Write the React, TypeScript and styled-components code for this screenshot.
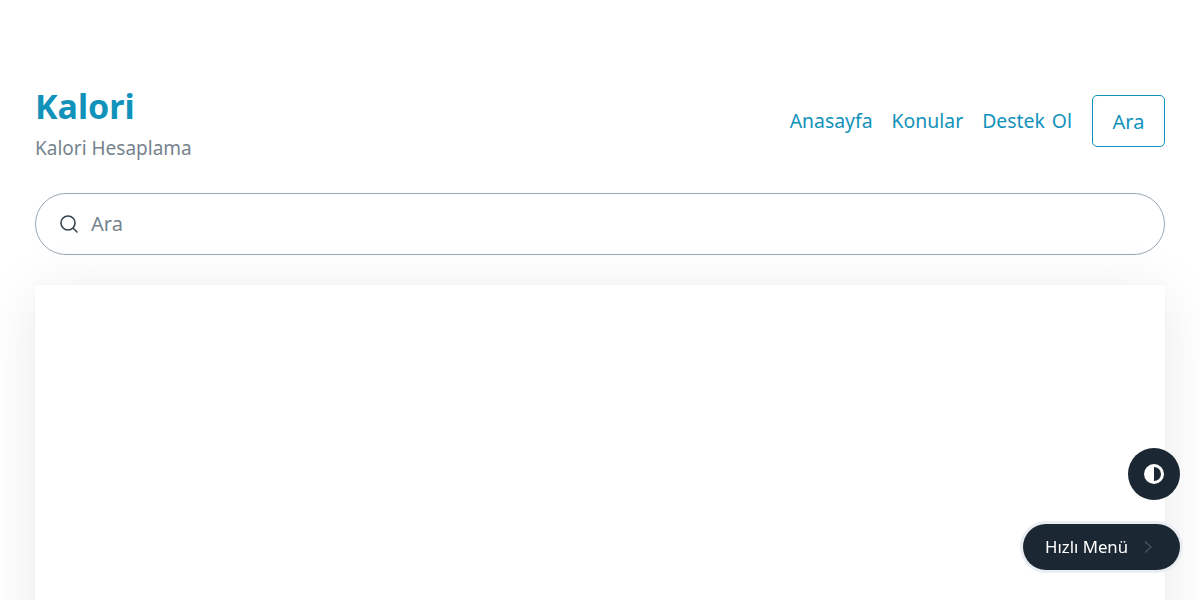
import React from 'react';
import styled, { createGlobalStyle } from 'styled-components';

const GlobalStyle = createGlobalStyle`
  html, body {
    margin: 0;
    height: 100%;
    overflow: hidden;
    background: #fff;
  }

  body {
    font-family: "Noto Sans", "Open Sans", sans-serif;
  }

  * {
    box-sizing: border-box;
  }
`;

const Page = styled.div`
  padding: 87px 35px 0;
`;

const Header = styled.header`
  display: flex;
  align-items: flex-start;
  justify-content: space-between;
  height: 85px;
`;

const Brand = styled.div`
  display: flex;
  flex-direction: column;
`;

const Title = styled.a`
  font-size: 34px;
  font-weight: 700;
  line-height: 38px;
  color: #1192bb;
`;

const Subtitle = styled.span`
  margin-top: 11px;
  font-size: 19px;
  line-height: 24px;
  color: #76838e;
`;

const Nav = styled.nav`
  display: flex;
  align-items: center;
  gap: 19px;
  margin-top: 8px;
`;

const NavLink = styled.a`
  font-size: 19.4px;
  line-height: 24px;
  word-spacing: 2px;
  color: #1192bb;
`;

const SearchButton = styled.button`
  width: 73px;
  height: 52px;
  margin-left: 1px;
  border: 1px solid #1192bb;
  border-radius: 5px;
  background: #fff;
  font: inherit;
  font-size: 20px;
  color: #1192bb;
`;

const SearchBar = styled.label`
  position: relative;
  z-index: 1;
  display: flex;
  align-items: center;
  gap: 12px;
  height: 62px;
  margin-top: 21px;
  padding: 0 23px;
  border: 1px solid #9aa8b2;
  border-radius: 31px;
  color: #36424d;
`;

const SearchPlaceholder = styled.span`
  padding-bottom: 2px;
  font-size: 20px;
  color: #76838e;
`;

const Card = styled.main`
  height: 600px;
  margin-top: 30px;
  border-radius: 3px;
  background: #fff;
  box-shadow: 0 8px 60px rgba(0, 0, 0, 0.09), 0 0 2px rgba(0, 0, 0, 0.04);
`;

const ThemeToggle = styled.button`
  position: fixed;
  right: 20px;
  bottom: 100px;
  display: flex;
  align-items: center;
  justify-content: center;
  width: 52px;
  height: 52px;
  padding: 0;
  border: 0;
  border-radius: 50%;
  background: #1b2733;
`;

const QuickMenu = styled.button`
  position: fixed;
  right: 20px;
  bottom: 30px;
  display: flex;
  align-items: center;
  justify-content: space-between;
  width: 157px;
  height: 46px;
  padding: 0 27px 0 22px;
  border: 0;
  border-radius: 23px;
  background: #1b2733;
  box-shadow: 0 0 0 3px #eaeef2;
  font: inherit;
  font-size: 16.8px;
  color: #fff;
`;

const QuickMenuLabel = styled.span`
  padding-bottom: 2px;
`;

const App = () => {
  return (
    <>
      <GlobalStyle />
      <Page>
        <Header>
          <Brand>
            <Title>Kalori</Title>
            <Subtitle>Kalori Hesaplama</Subtitle>
          </Brand>
          <Nav>
            <NavLink>Anasayfa</NavLink>
            <NavLink>Konular</NavLink>
            <NavLink>Destek Ol</NavLink>
            <SearchButton>Ara</SearchButton>
          </Nav>
        </Header>
        <SearchBar>
          <svg width="20" height="20" viewBox="0 0 20 20" fill="none" stroke="currentColor" strokeWidth="1.6" strokeLinecap="round">
            <circle cx="9" cy="9" r="7" />
            <path d="M14.2 14.2 L18 18" />
          </svg>
          <SearchPlaceholder>Ara</SearchPlaceholder>
        </SearchBar>
        <Card />
      </Page>
      <ThemeToggle aria-label="Tema">
        <svg width="20" height="20" viewBox="0 0 20 20">
          <circle cx="10" cy="10" r="10" fill="#fff" />
          <path d="M10 3 A7 7 0 0 1 10 17 Z" fill="#1b2733" />
        </svg>
      </ThemeToggle>
      <QuickMenu>
        <QuickMenuLabel>Hızlı Menü</QuickMenuLabel>
        <svg width="10" height="14" viewBox="0 0 10 14" fill="none" stroke="#46525d" strokeWidth="1.4">
          <path d="M2 1.5 L8 7 L2 12.5" />
        </svg>
      </QuickMenu>
    </>
  );
};

export default App;
